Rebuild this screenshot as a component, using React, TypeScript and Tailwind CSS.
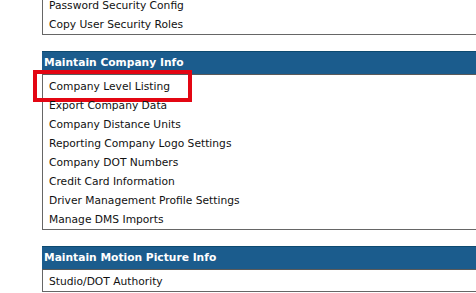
import React from "react";

const font = { fontFamily: '"DejaVu Sans", Verdana, sans-serif' };

function Row({ label, highlight }: { label: string; highlight?: boolean }) {
  return (
    <div className="relative h-[19px] leading-[19px] pl-[6px] text-[10.7px] text-[#111] whitespace-nowrap">
      {label}
      {highlight && (
        <div className="absolute left-[-10px] top-[-7px] w-[159px] h-[32px] border-[4px] border-[#e30613]" />
      )}
    </div>
  );
}

function Header({ title }: { title: string }) {
  return (
    <div className="h-[24px] bg-[#1b5c8d] border-t border-t-[#0d4a70] border-b border-b-[#5a5a5a] pl-[2px] leading-[22px] text-[10.7px] font-bold text-white whitespace-nowrap">
      {title}
    </div>
  );
}

function Section({
  title,
  items,
  highlightIndex,
}: {
  title?: string;
  items: string[];
  highlightIndex?: number;
}) {
  return (
    <div>
      {title && <Header title={title} />}
      <div
        className={
          "border-l border-b border-[#666] " + (title ? "pt-[2px]" : "")
        }
      >
        {items.map((item, i) => (
          <Row key={item} label={item} highlight={i === highlightIndex} />
        ))}
      </div>
    </div>
  );
}

export default function App() {
  return (
    <div className="w-[476px] h-[293px] overflow-hidden bg-white" style={font}>
      <div className="w-[480px] ml-[42px] mt-[-4px] flex flex-col gap-[16px]">
        <Section items={["Password Security Config", "Copy User Security Roles"]} />
        <Section
          title="Maintain Company Info"
          highlightIndex={0}
          items={[
            "Company Level Listing",
            "Export Company Data",
            "Company Distance Units",
            "Reporting Company Logo Settings",
            "Company DOT Numbers",
            "Credit Card Information",
            "Driver Management Profile Settings",
            "Manage DMS Imports",
          ]}
        />
        <Section title="Maintain Motion Picture Info" items={["Studio/DOT Authority"]} />
      </div>
    </div>
  );
}
